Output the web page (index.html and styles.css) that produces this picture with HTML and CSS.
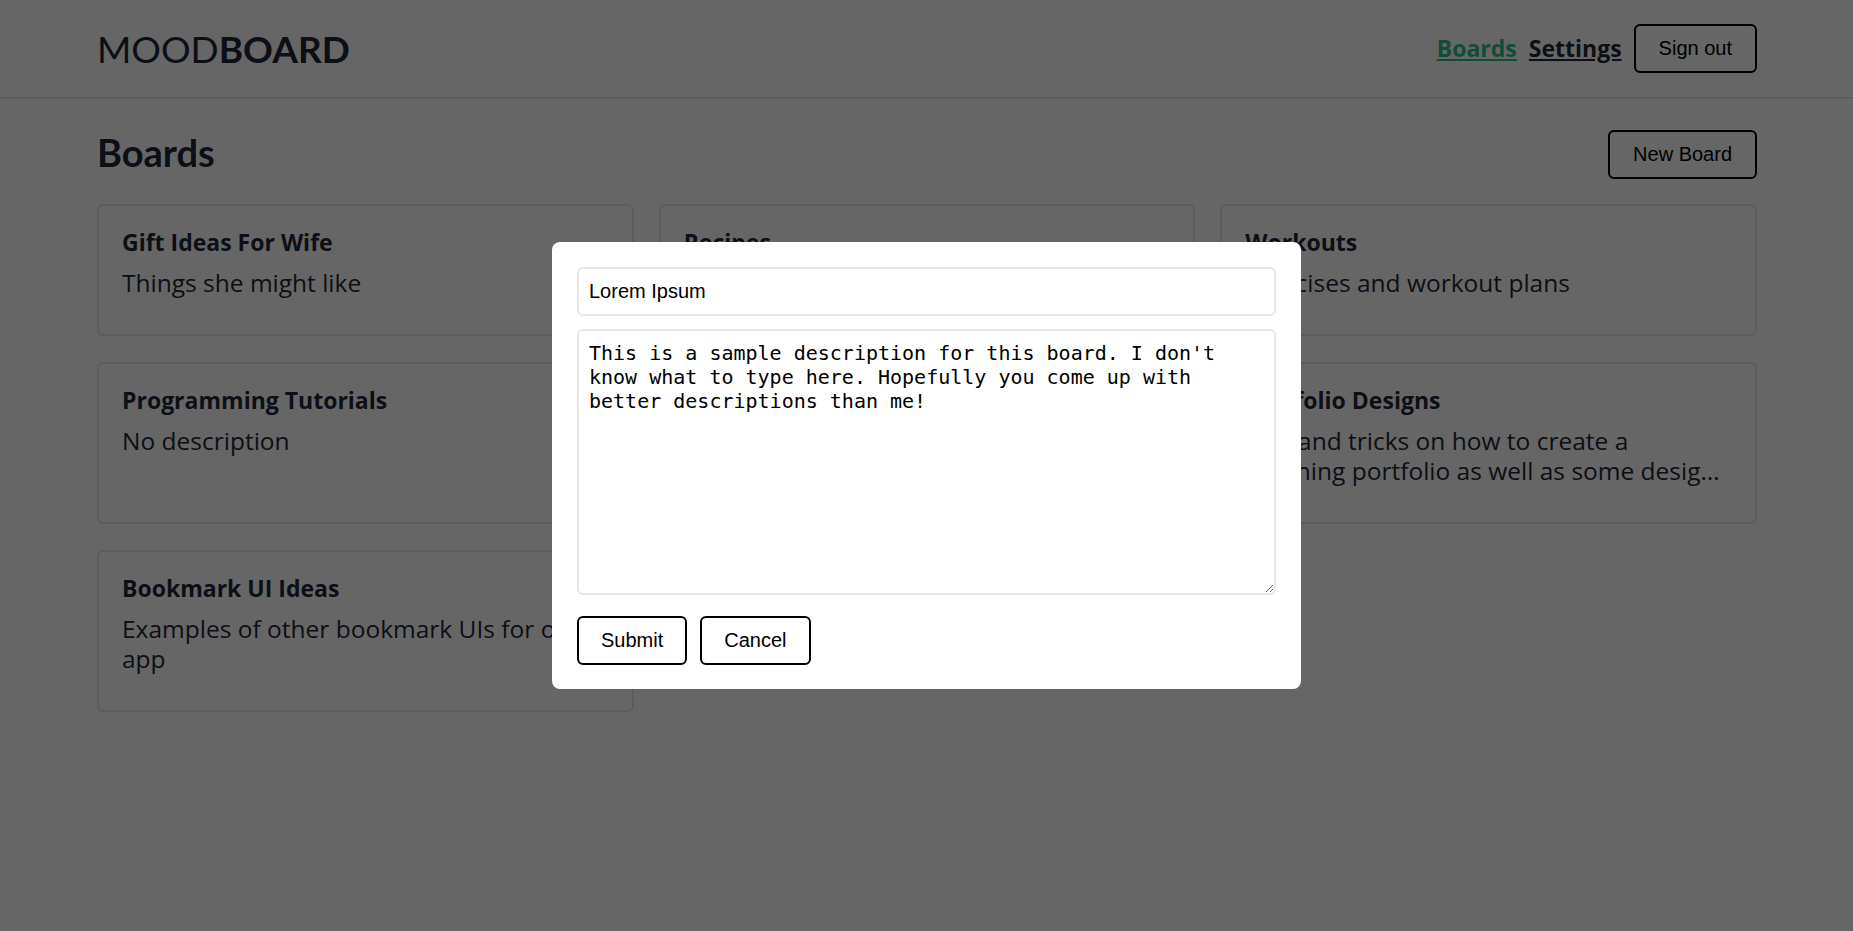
FILE: index.html
```html
<!DOCTYPE html>
<html lang="en">
<head>
    <meta charset="UTF-8">
    <meta name="viewport" content="width=device-width, initial-scale=1.0">
    <title>Moodboard</title>
    <link rel="stylesheet" href="styles.css">
</head>
<body>
    <header class="header">
        <div class="logo">MOOD<b>BOARD</b></div>
        <nav class="nav">
            <a href="#" class="nav-link active">Boards</a>
            <a href="#" class="nav-link">Settings</a>
            <button class="button">Sign out</button>
        </nav>
    </header>
    <main class="main">
        <div class="title-row">
            <h1 class="page-title">Boards</h1>
            <button class="button">New Board</button>
        </div>
        <div class="boards">
            <div class="board">
                <div class="board-name">Gift Ideas For Wife</div>
                <div class="board-desc">Things she might like</div>
            </div>
            <div class="board">
                <div class="board-name">Recipes</div>
                <div class="board-desc">Meals we want to cook</div>
            </div>
            <div class="board">
                <div class="board-name">Workouts</div>
                <div class="board-desc">Exercises and workout plans</div>
            </div>
            <div class="board">
                <div class="board-name">Programming Tutorials</div>
                <div class="board-desc">No description</div>
            </div>
            <div class="board">
                <div class="board-name">Travel</div>
                <div class="board-desc">Places we want to visit</div>
            </div>
            <div class="board">
                <div class="board-name">Portfolio Designs</div>
                <div class="board-desc clamp">Tips and tricks on how to create a stunning portfolio as well as some designs that inspire me</div>
            </div>
            <div class="board">
                <div class="board-name">Bookmark UI Ideas</div>
                <div class="board-desc">Examples of other bookmark UIs for our app</div>
            </div>
        </div>
    </main>

    <div class="overlay">
        <form class="modal">
            <input class="field" type="text" value="Lorem Ipsum">
            <textarea class="field area">This is a sample description for this board. I don't know what to type here. Hopefully you come up with better descriptions than me!</textarea>
            <div class="modal-actions">
                <button type="button" class="button">Submit</button>
                <button type="button" class="button">Cancel</button>
            </div>
        </form>
    </div>
</body>
</html>
```

FILE: styles.css
```css
body {
    margin: 0;
    background-color: #fff;
    color: #1f2937;
    font-family: "Open Sans", "Noto Sans", sans-serif;
}
.header {
    display: flex;
    justify-content: space-between;
    align-items: center;
    padding: 24px 96px 24px 97px;
    border-bottom: 2px solid #e5e7eb;
}
.logo {
    font-family: Lato, sans-serif;
    font-size: 37px;
    line-height: 1;
}
.logo b {
    font-weight: 700;
}
.nav {
    display: flex;
    align-items: center;
    gap: 12px;
}
.nav-link {
    color: #1f2937;
    font-size: 23px;
    font-weight: 700;
    margin-top: -2px;
}
.nav-link.active {
    color: #2fbf86;
}
.button {
    padding: 11px 23px;
    font-family: "Liberation Sans", Arial, sans-serif;
    font-size: 20px;
    line-height: 23px;
    color: #000;
    background-color: #fff;
    border: 2px solid #000;
    border-radius: 6px;
    cursor: pointer;
}
.main {
    padding: 31px 96px 30px 97px;
}
.title-row {
    display: flex;
    justify-content: space-between;
    align-items: center;
    margin-bottom: 25px;
}
.page-title {
    margin: -5px 0 0;
    font-family: Lato, sans-serif;
    font-size: 38px;
    font-weight: 700;
}
.boards {
    display: grid;
    grid-template-columns: repeat(3, 1fr);
    gap: 26px 25px;
}
.board {
    border: 2px solid #e5e7eb;
    border-radius: 6px;
    padding: 22px 23px 36px;
}
.board-name {
    font-size: 23px;
    font-weight: 700;
    line-height: 29px;
    margin-bottom: 11px;
}
.board-desc {
    font-size: 24.5px;
    line-height: 30px;
}
.board-desc.clamp {
    display: -webkit-box;
    -webkit-line-clamp: 2;
    -webkit-box-orient: vertical;
    overflow: hidden;
}
.overlay {
    position: fixed;
    inset: 0;
    background-color: rgba(0, 0, 0, 0.6);
    display: flex;
    justify-content: center;
    align-items: center;
}
.modal {
    width: 749px;
    box-sizing: border-box;
    padding: 25px 25px 24px;
    background-color: #fff;
    border-radius: 8px;
    display: flex;
    flex-direction: column;
}
.field {
    box-sizing: border-box;
    width: 100%;
    height: 49px;
    padding: 10px;
    border: 2px solid #e5e7eb;
    border-radius: 6px;
    font-family: "Liberation Sans", Arial, sans-serif;
    font-size: 20px;
    color: #000;
    outline: none;
}
.area {
    height: 266px;
    margin-top: 13px;
    font-family: "DejaVu Sans Mono", monospace;
    line-height: 24px;
    resize: vertical;
}
.modal-actions {
    display: flex;
    gap: 13px;
    margin-top: 21px;
}
.modal-actions .button {
    padding: 11px 22px;
}
```
